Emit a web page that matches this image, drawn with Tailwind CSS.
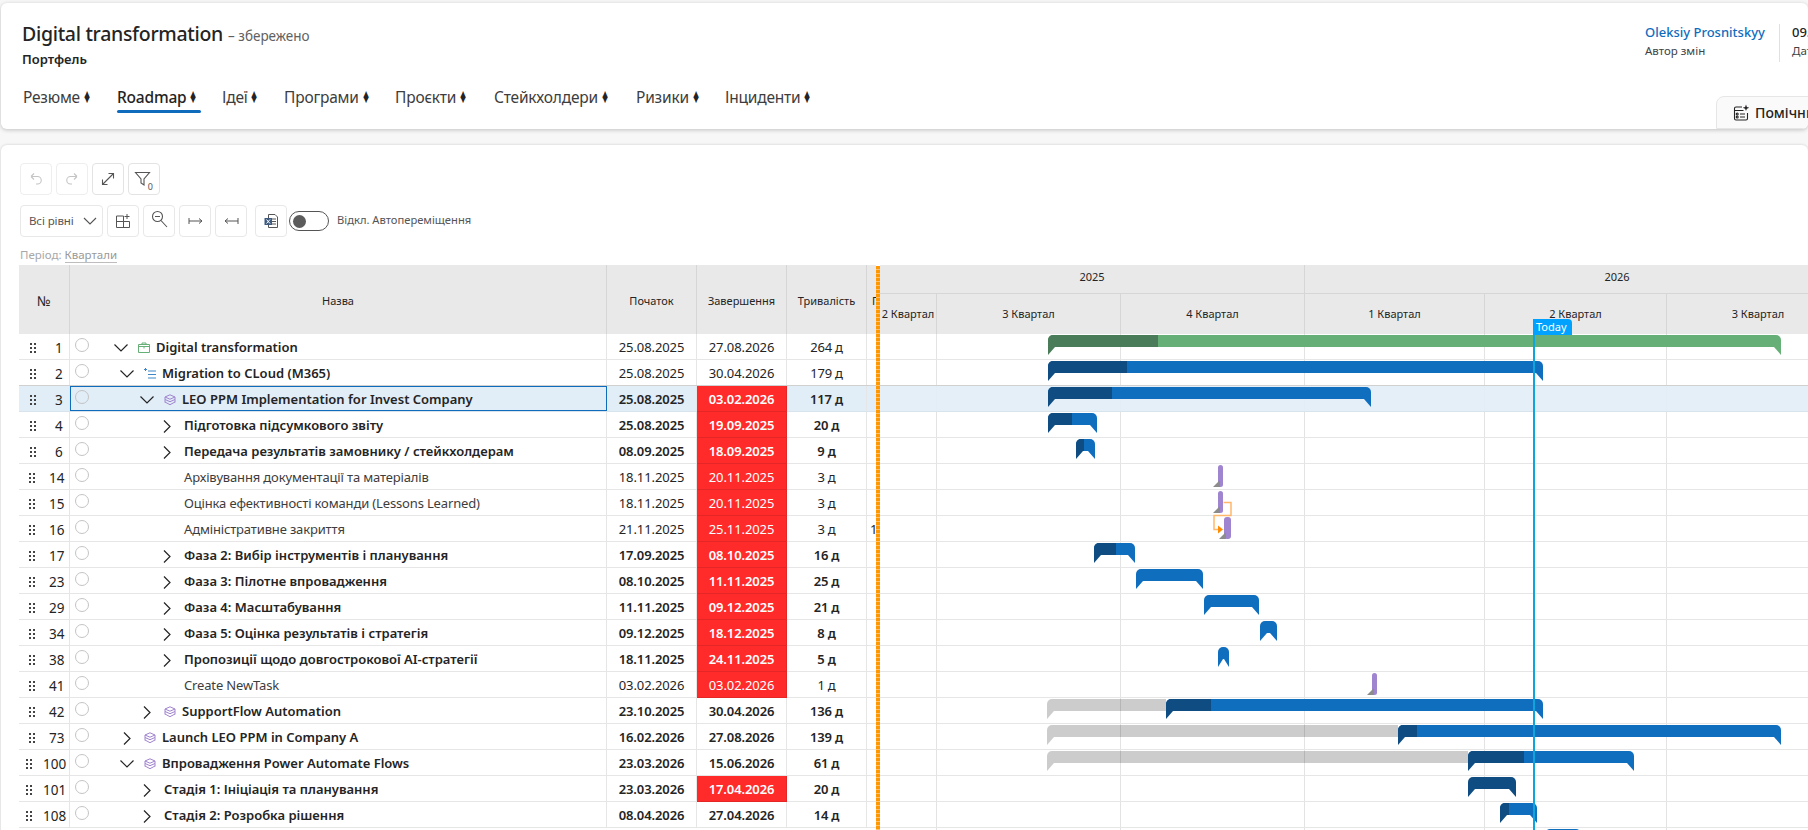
<!DOCTYPE html>
<html lang="uk">
<head>
    <meta charset="UTF-8">
    <title>Digital transformation - Roadmap</title>
    <script src="https://cdn.jsdelivr.net/npm/@tailwindcss/browser@4"></script>
</head>
<body class="bg-[#f7f7f7] h-[830px] overflow-hidden font-['Noto_Sans','Open_Sans',sans-serif] text-[#242424]">

    <!-- Top card -->
    <header class="relative ml-px mt-[3px] h-[126px] bg-white rounded-md shadow-[0_1px_4px_rgba(0,0,0,0.22)] overflow-hidden">
        <div class="pl-[21px] pt-[17px]">
            <div class="flex items-baseline">
                <h1 class="text-[19.5px] leading-7 font-medium tracking-[-0.3px]">Digital transformation</h1>
                <span class="ml-[5px] text-[13.5px] text-[#616161]">– збережено</span>
            </div>
            <div class="mt-[3px] text-[13px] leading-4 font-semibold">Портфель</div>
        </div>
        <nav id="tabs" class="flex pl-[22px] mt-[18px] text-[15.5px] leading-6"></nav>

        <div class="absolute left-[1644px] top-[21px] flex h-[38px]">
            <div class="w-[134px]">
                <div class="text-[13px] leading-4 font-medium text-[#0f6cbd] whitespace-nowrap">Oleksiy Prosnitskyy</div>
                <div class="mt-[3px] text-[11.5px] leading-4 text-[#424242]">Автор змін</div>
            </div>
            <div class="w-px bg-[#e0e0e0]"></div>
            <div class="pl-3 whitespace-nowrap">
                <div class="text-[13px] leading-4 font-medium">09.10.2025</div>
                <div class="mt-[3px] text-[11.5px] leading-4 text-[#424242]">Дата змін</div>
            </div>
        </div>

        <div class="absolute left-[1715px] top-[93px] w-[120px] h-[33px] bg-[#fafafa] border border-[#e6e6e6] rounded-tl-lg flex items-center pl-4">
            <svg width="17" height="17" viewBox="0 0 17 17" fill="none" stroke="#242424" stroke-width="1.100">
                <path d="M9 3H3a1.500 1.500 0 0 0-1.500 1.500v10A1.500 1.500 0 0 0 3 16h10a1.500 1.500 0 0 0 1.500-1.500V9"/>
                <path d="M1.500 6.500h9M7 10h5M7 13h5"/>
                <circle cx="4.200" cy="10" r="1"/><circle cx="4.200" cy="13" r="1"/>
                <path d="M13 .5l.9 2.400 2.400.9-2.400.9-.9 2.400-.9-2.400-2.400-.9 2.400-.9z" fill="#242424" stroke="none"/>
            </svg>
            <span class="ml-[5px] text-[14px] font-medium whitespace-nowrap">Помічник</span>
        </div>
    </header>

    <!-- Roadmap card -->
    <main class="ml-px mt-4 h-[690px] bg-white rounded-t-md shadow-[0_0_3px_rgba(0,0,0,0.18)] overflow-hidden">
        <div class="pl-[19px] pt-[18px]">
            <div class="flex gap-1">
                <button class="w-8 h-8 border border-[#eeeeee] rounded flex items-center justify-center">
                    <svg width="16" height="16" viewBox="0 0 16 16" fill="none" stroke="#c4c4c4" stroke-width="1.100"><path d="M3 5.500h6.500a3.700 3.700 0 0 1 0 7.500H8M3 5.500 6 2.500M3 5.500 6 8.500"/></svg>
                </button>
                <button class="w-8 h-8 border border-[#eeeeee] rounded flex items-center justify-center">
                    <svg width="16" height="16" viewBox="0 0 16 16" fill="none" stroke="#c4c4c4" stroke-width="1.100"><path d="M13 5.500H6.500a3.700 3.700 0 0 0 0 7.500H8M13 5.500 10 2.500M13 5.500 10 8.500"/></svg>
                </button>
                <button class="w-8 h-8 border border-[#e3e3e3] rounded flex items-center justify-center">
                    <svg width="16" height="16" viewBox="0 0 16 16" fill="none" stroke="#555" stroke-width="1.100"><path d="M2.500 13.500 13.500 2.500M8.500 2.500h5v5M2.500 8.500v5h5"/></svg>
                </button>
                <button class="relative w-8 h-8 border border-[#e3e3e3] rounded flex items-center justify-center">
                    <svg class="-mt-0.5 -ml-1" width="17" height="17" viewBox="0 0 17 17" fill="none" stroke="#555" stroke-width="1.100"><path d="M1.500 2.500h14L10 9v6L7 13V9z"/></svg>
                    <span class="absolute right-[6px] bottom-[3px] text-[9px] leading-none text-[#555]">0</span>
                </button>
            </div>

            <div class="flex mt-[10px] h-8">
                <button class="w-[83px] border border-[#e8e8e8] rounded flex items-center pl-[8px] text-[11.5px] text-[#555] tracking-[-0.1px]">
                    Всі рівні
                    <svg class="ml-[9px]" width="14" height="8" viewBox="0 0 14 8" fill="none" stroke="#555" stroke-width="1.100"><path d="M1 1l6 6 6-6"/></svg>
                </button>
                <button class="ml-1 w-8 border border-[#e8e8e8] rounded flex items-center justify-center">
                    <svg width="16" height="16" viewBox="0 0 16 16" fill="none" stroke="#555" stroke-width="1"><path d="M1.500 3h7v5.500h6v6h-13zM1.500 8.500h7M8.500 8.500v6M12 1v5M9.500 3.500h5"/></svg>
                </button>
                <button class="ml-1 w-8 border border-[#e8e8e8] rounded flex items-center justify-center">
                    <svg class="-mt-1" width="17" height="18" viewBox="0 0 17 18" fill="none" stroke="#555" stroke-width="1.100"><circle cx="6.500" cy="6.500" r="5"/><path d="M4 6.500h5M10 10.500l6 6.500"/></svg>
                </button>
                <button class="ml-1 w-8 border border-[#e8e8e8] rounded flex items-center justify-center">
                    <svg width="15" height="10" viewBox="0 0 15 10" fill="none" stroke="#555" stroke-width="1"><path d="M1 2v6M1 5h13M11 2.500 14 5l-3 2.500"/></svg>
                </button>
                <button class="ml-1 w-8 border border-[#e8e8e8] rounded flex items-center justify-center">
                    <svg width="15" height="10" viewBox="0 0 15 10" fill="none" stroke="#555" stroke-width="1"><path d="M14 2v6M14 5H1M4 2.500 1 5l3 2.500"/></svg>
                </button>
                <button class="ml-2 w-8 border border-[#e8e8e8] rounded flex items-center justify-center">
                    <svg width="16" height="16" viewBox="0 0 16 16"><path d="M5.500 1.500h6.500l2.500 2.500v10.500h-9z" fill="#fff" stroke="#555"/><path d="M9 6h4M9 8.500h4M9 11h4" stroke="#555"/><rect x="1.500" y="5" width="7.500" height="7" fill="#3d5a80"/><path d="M3.500 6.500l3.500 4M7 6.500l-3.500 4" stroke="#fff"/></svg>
                </button>
                <div class="ml-[2px] mt-[6px] w-10 h-5 border border-[#555] rounded-full flex items-center pl-[3px]">
                    <span class="w-[13px] h-[13px] rounded-full bg-[#5c5c5c]"></span>
                </div>
                <span class="ml-2 mt-[7px] text-[11.2px] leading-4 text-[#555] whitespace-nowrap">Відкл. Автопереміщення</span>
            </div>

            <div class="mt-[10px] h-[18px] text-[11.5px] leading-4 text-[#a8a8a8] whitespace-nowrap">
                Період: <span class="border-b border-[#bdbdbd] text-[#999999]">Квартали</span>
            </div>
        </div>

        <!-- Table + gantt -->
        <section class="relative flex ml-[18px]">
            <div class="w-[857px] shrink-0 text-[13px]">
                <div class="flex h-[69px] bg-[#e9e9e9] text-[11px] text-[#242424]">
                    <div class="w-[51px] flex items-center justify-center pt-[3px] border-r border-[#d6d6d6] text-[13.5px]">№</div>
                    <div class="w-[537px] flex items-center justify-center pt-[3px] border-r border-[#d6d6d6]">Назва</div>
                    <div class="w-[90px] flex items-center justify-center pt-[3px] border-r border-[#d6d6d6]">Початок</div>
                    <div class="w-[90px] flex items-center justify-center pt-[3px] border-r border-[#d6d6d6]">Завершення</div>
                    <div class="w-[80px] flex items-center justify-center pt-[3px] border-r border-[#d6d6d6]">Тривалість</div>
                    <div class="w-[9px] flex items-center pt-[3px] pl-[5px] overflow-hidden">П</div>
                </div>
                <div id="rows"></div>
            </div>

            <!-- Splitter -->
            <div class="w-1 shrink-0 mt-px h-[564px] bg-[repeating-linear-gradient(to_bottom,#ff9800_0,#ff9800_3px,#ffc266_3px,#ffc266_4px)]"></div>

            <div class="relative flex-1 min-w-0 overflow-hidden">
                <div class="h-[69px] bg-[#e9e9e9] text-[11px]">
                    <div class="flex h-[29px] border-b border-[#d6d6d6]">
                        <div class="w-[425px] shrink-0 flex items-center justify-center pb-[4px] border-r border-[#d6d6d6]">2025</div>
                        <div class="w-[624px] shrink-0 flex items-center justify-center pb-[4px]">2026</div>
                    </div>
                    <div class="flex h-10">
                        <div class="w-[57px] shrink-0 flex items-center justify-center border-r border-[#d6d6d6] whitespace-nowrap">2 Квартал</div>
                        <div class="w-[184px] shrink-0 flex items-center justify-center border-r border-[#d6d6d6]">3 Квартал</div>
                        <div class="w-[184px] shrink-0 flex items-center justify-center border-r border-[#d6d6d6]">4 Квартал</div>
                        <div class="w-[180px] shrink-0 flex items-center justify-center border-r border-[#d6d6d6]">1 Квартал</div>
                        <div class="w-[182px] shrink-0 flex items-center justify-center border-r border-[#d6d6d6]">2 Квартал</div>
                        <div class="w-[182px] shrink-0 flex items-center justify-center">3 Квартал</div>
                    </div>
                </div>
                <div id="chart" class="relative h-[496px]"></div>

                <!-- Today marker, x is chart-relative -->
                <div class="absolute left-[653px] top-[54px] bottom-0 w-0.5 bg-[#0ea5dc]"></div>
                <div class="absolute left-[653px] top-[54px] w-[39px] h-4 bg-[#00a2ff] rounded-tr-sm text-white text-[11px] leading-4 pl-[3px]">Today</div>
            </div>
        </section>
    </main>

    <script>
        // tabs
        const tabs = ['Резюме', 'Roadmap', 'Ідеї', 'Програми', 'Проєкти', 'Стейкхолдери', 'Ризики', 'Інциденти'];
        const tabWidths = [94, 105, 62, 111, 99, 142, 89, 90];
        document.getElementById('tabs').innerHTML = tabs.map((t, i) => {
            const active = t === 'Roadmap';
            return `<a class="relative whitespace-nowrap tracking-[-0.2px] ${active ? 'font-medium' : 'text-[#3d3d3d]'}" style="width:${tabWidths[i]}px">${t} <span class="inline-block text-[20px] leading-none scale-x-[0.6] text-[#242424] -ml-[2px]">♦</span>${active ? '<span class="absolute left-0 top-[25px] w-[84px] h-[3px] rounded-full bg-[#0f6cbd]"></span>' : ''}</a>`;
        }).join('');

        // [num, indent, chevron, icon, name, start, end, duration, overdue, boldName, boldDates]
        const rowsData = [
            [1, 24, 'down', 'portfolio', 'Digital transformation', '25.08.2025', '27.08.2026', 264, false, true, false],
            [2, 30, 'down', 'program', 'Migration to CLoud (M365)', '25.08.2025', '30.04.2026', 179, false, true, false],
            [3, 50, 'down', 'project', 'LEO PPM Implementation for Invest Company', '25.08.2025', '03.02.2026', 117, true, true, true],
            [4, 70, 'right', '', 'Підготовка підсумкового звіту', '25.08.2025', '19.09.2025', 20, true, true, true],
            [6, 70, 'right', '', 'Передача результатів замовнику / стейкхолдерам', '08.09.2025', '18.09.2025', 9, true, true, true],
            [14, 70, '', '', 'Архівування документації та матеріалів', '18.11.2025', '20.11.2025', 3, true, false, false],
            [15, 70, '', '', 'Оцінка ефективності команди (Lessons Learned)', '18.11.2025', '20.11.2025', 3, true, false, false],
            [16, 70, '', '', 'Адміністративне закриття', '21.11.2025', '25.11.2025', 3, true, false, false],
            [17, 70, 'right', '', 'Фаза 2: Вибір інструментів і планування', '17.09.2025', '08.10.2025', 16, true, true, true],
            [23, 70, 'right', '', 'Фаза 3: Пілотне впровадження', '08.10.2025', '11.11.2025', 25, true, true, true],
            [29, 70, 'right', '', 'Фаза 4: Масштабування', '11.11.2025', '09.12.2025', 21, true, true, true],
            [34, 70, 'right', '', 'Фаза 5: Оцінка результатів і стратегія', '09.12.2025', '18.12.2025', 8, true, true, true],
            [38, 70, 'right', '', 'Пропозиції щодо довгострокової AI-стратегії', '18.11.2025', '24.11.2025', 5, true, true, true],
            [41, 70, '', '', 'Create NewTask', '03.02.2026', '03.02.2026', 1, true, false, false],
            [42, 50, 'right', 'project', 'SupportFlow Automation', '23.10.2025', '30.04.2026', 136, false, true, true],
            [73, 30, 'right', 'project', 'Launch LEO PPM in Company A', '16.02.2026', '27.08.2026', 139, false, true, true],
            [100, 30, 'down', 'project', 'Впровадження Power Automate Flows', '23.03.2026', '15.06.2026', 61, false, true, true],
            [101, 50, 'right', '', 'Стадія 1: Ініціація та планування', '23.03.2026', '17.04.2026', 20, true, true, true],
            [108, 50, 'right', '', 'Стадія 2: Розробка рішення', '08.04.2026', '27.04.2026', 14, false, true, true],
        ];

        const chevrons = {
            down: '<svg width="14" height="8" viewBox="0 0 14 8" fill="none" stroke="#242424" stroke-width="1.200"><path d="M.5.5 7 7 13.500.5"/></svg>',
            right: '<svg width="8" height="13" viewBox="0 0 8 13" fill="none" stroke="#242424" stroke-width="1.200"><path d="M1 .5 7 6.500 1 12.500"/></svg>',
            '': ''
        };
        const icons = {
            portfolio: '<svg class="mr-[6px] shrink-0" width="12" height="12" viewBox="0 0 12 12" fill="none" stroke="#66b077"><path d="M.5 2.500h11v8H.5zM4 2.500V1h4v1.500M.5 4.500h11M6 4.500v2" /></svg>',
            program: '<svg class="mr-[6px] shrink-0" width="12" height="12" viewBox="0 0 12 12" fill="none" stroke="#3f86c7"><path d="M0 1.500h3M1.500 0v3M4 3h8M4 6.500h8M4 10h8" /></svg>',
            project: '<svg class="mr-[6px] shrink-0" width="12" height="12" viewBox="0 0 12 12" fill="none" stroke="#a084cf"><path d="M6 .8 11 3 6 5.200 1 3zM1 5.500 6 7.700l5-2.200M1 8l5 2.700L11 8" /><path d="M1 3v5.500M11 3v5.500"/></svg>',
            '': ''
        };
        const numCells = {
            1: ['pl-[11px]', 'ml-[19px]'],
            2: ['pl-[10px]', 'ml-[14px]'],
            3: ['pl-[7px]', 'ml-[11px]'],
        };

        const rowBox = document.getElementById('rows');
        rowBox.innerHTML = rowsData.map(r => {
            const [num, indent, chev, icon, name, start, end, dur, overdue, boldName, boldDates] = r;
            const selected = num === 3;
            const [cellPad, numGap] = numCells[String(num).length];
            const dateWeight = boldDates ? 'font-semibold' : '';
            const lineColor = selected ? 'bg-[#e1edf7] border-[#d9e3ec]' : num === 2 ? 'border-[#d0d0d0]' : 'border-[#e6e6e6]';
            return `<div class="flex h-[26px] border-b ${lineColor}">
                <div class="w-[51px] flex items-center pt-[3px] border-r border-[#e6e6e6] text-[13.5px] ${cellPad}">
                    <svg width="6" height="10" viewBox="0 0 6 10" fill="#444"><rect width="2" height="2"/><rect x="4" width="2" height="2"/><rect y="4" width="2" height="2"/><rect x="4" y="4" width="2" height="2"/><rect y="8" width="2" height="2"/><rect x="4" y="8" width="2" height="2"/></svg>
                    <span class="${numGap}">${num}</span>
                </div>
                <div class="relative w-[537px] flex items-center pt-[3px] border-r border-[#e6e6e6] ${selected ? 'outline outline-[#0f6cbd] -outline-offset-1' : ''}">
                    <span class="relative -top-[3px] ml-[5px] w-[14px] h-[14px] shrink-0 rounded-full border border-[#c4c4c4]"></span>
                    <span class="w-4 h-4 shrink-0 flex items-center justify-center" style="margin-left:${indent}px">${chevrons[chev]}</span>
                    <span class="ml-[9px] flex items-center whitespace-nowrap ${boldName ? 'font-semibold' : 'text-[#3d3d3d] tracking-[-0.15px]'}">${icons[icon]}${name}</span>
                </div>
                <div class="w-[90px] flex items-center justify-center pt-[3px] border-r border-[#e6e6e6] ${dateWeight} tracking-[-0.1px]">${start}</div>
                <div class="w-[90px] flex items-center justify-center pt-[3px] border-r tracking-[-0.1px] ${overdue ? '-mb-px border-b bg-[#ff2a2a] text-white border-[#e52626]' : 'border-[#e6e6e6]'} ${dateWeight}">${end}</div>
                <div class="w-[80px] flex items-center justify-center pt-[3px] border-r border-[#e6e6e6] tracking-[-0.2px] ${dateWeight}">${dur} д</div>
                <div class="w-[9px] flex items-center pt-[3px] pl-[3px] overflow-hidden">${num === 16 ? '1' : ''}</div>
            </div>`;
        }).join('');

        // gantt: x values are page pixels, chart starts at x=880
        const chartX = 880;
        const green = ['#4a7c59', '#66b077'];
        const blue = ['#0f4c81', '#106ebe'];
        // [row, from, to, progressEnd, palette, plannedFrom]
        const bars = [
            [0, 1048, 1781, 1158, green],
            [1, 1048, 1543, 1127, blue],
            [2, 1048, 1371, 1112, blue],
            [3, 1048, 1097, 1072, blue],
            [4, 1076, 1095, 1084, blue],
            [8, 1094, 1135, 1116, blue],
            [9, 1136, 1203, 0, blue],
            [10, 1204, 1259, 0, blue],
            [11, 1260, 1277, 0, blue],
            [12, 1218, 1229, 0, blue],
            [14, 1166, 1543, 1211, blue, 1047],
            [15, 1398, 1781, 1417, blue, 1047],
            [16, 1468, 1634, 1524, blue, 1047],
            [17, 1468, 1516, 1516, blue],
            [18, 1500, 1537, 1509, blue],
        ];
        // [row, x, width]
        const tasks = [[5, 1218, 5], [6, 1218, 5], [7, 1224, 7], [13, 1372, 5]];

        let chartHtml = '';
        [57, 241, 425, 605, 787].forEach(x => {
            chartHtml += `<div class="absolute top-0 bottom-0 w-px bg-[#e3e3e3]" style="left:${x - 1}px"></div>`;
        });
        rowsData.forEach((r, i) => {
            const line = i === 2 ? 'bg-[#e1edf7]/90 border-[#d9e3ec]' : i === 1 ? 'border-[#d0d0d0]' : 'border-[#e6e6e6]';
            chartHtml += `<div class="absolute left-0 right-0 h-[26px] border-b ${line}" style="top:${i * 26}px"></div>`;
        });
        bars.forEach(([row, from, to, done, pal, planned]) => {
            const w = to - from;
            const tail = Math.min(7, Math.floor(w / 2));
            const top = row * 26 + 1;
            if (planned) {
                chartHtml += `<div class="absolute h-3 rounded-tl-[5px] bg-black/20" style="left:${planned - chartX}px;top:${top}px;width:${from - planned}px"></div>`;
                chartHtml += `<div class="absolute h-2 bg-black/20 [clip-path:polygon(0_0,100%_0,0_100%)]" style="left:${planned - chartX}px;top:${top + 12}px;width:7px"></div>`;
            }
            const leftColor = done > from ? pal[0] : pal[1];
            const rightColor = done >= to ? pal[0] : pal[1];
            chartHtml += `<div class="absolute h-5" style="left:${from - chartX}px;top:${top}px;width:${w}px">
                <div class="h-3 rounded-t-[5px] overflow-hidden" style="background:${pal[1]}"><div class="h-full" style="background:${pal[0]};width:${Math.max(done - from, 0)}px"></div></div>
                <div class="absolute left-0 top-3 h-2 [clip-path:polygon(0_0,100%_0,0_100%)]" style="background:${leftColor};width:${tail}px"></div>
                <div class="absolute right-0 top-3 h-2 [clip-path:polygon(0_0,100%_0,100%_100%)]" style="background:${rightColor};width:${tail}px"></div>
            </div>`;
        });
        tasks.forEach(([row, x, width]) => {
            const top = row * 26 + 1;
            chartHtml += `<div class="absolute h-[22px] rounded-[3px] bg-[#9f84cf]" style="left:${x - chartX}px;top:${top}px;width:${width}px"></div>`;
            chartHtml += `<div class="absolute w-[7px] h-[7px] bg-[#8c8c8c] [clip-path:polygon(100%_0,100%_100%,0_100%)]" style="left:${x - chartX - 5}px;top:${top + 15}px"></div>`;
        });
        // dependency between rows 15 and 16
        chartHtml += `<svg class="absolute left-0 top-0" width="500" height="220" fill="none">
            <path d="M343.500 168.500H351V181.500H334V195.500H340" stroke="#ffb76b" stroke-width="1.500"/>
            <path d="M338 191.500l5 4-5 4z" fill="#ff8c00"/>
        </svg>`;
        // top of the next row's bar, mostly cut off by the window
        chartHtml += `<div class="absolute h-3 rounded-t-[5px] bg-[#106ebe]" style="left:${1545 - chartX}px;top:${19 * 26 + 1}px;width:36px"></div>`;
        document.getElementById('chart').innerHTML = chartHtml;
    </script>
</body>
</html>
